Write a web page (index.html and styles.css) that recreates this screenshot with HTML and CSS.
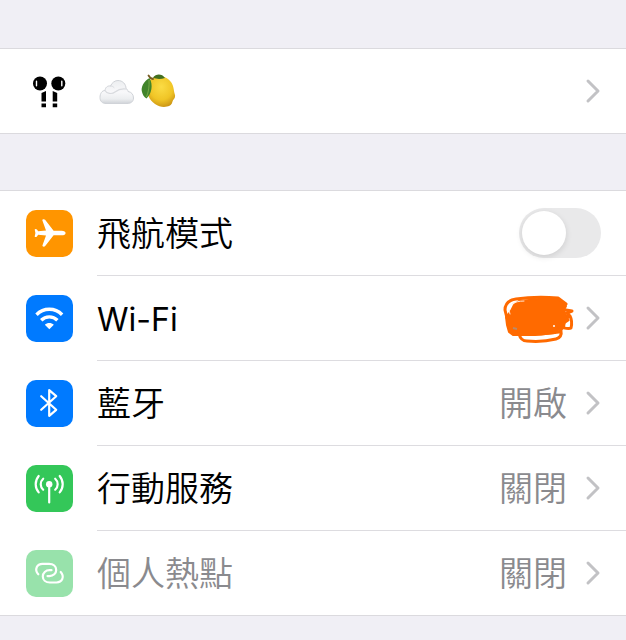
FILE: index.html
```html
<!DOCTYPE html>
<html lang="zh-Hant">
<head>
  <meta charset="UTF-8">
  <meta name="viewport" content="width=device-width, initial-scale=1.0">
  <title>設定</title>
  <link rel="stylesheet" href="styles.css">
</head>
<body>
  <main class="settings">
    <section class="group">
      <a class="row" href="#airpods" aria-label="AirPods">
        <svg class="icon" viewBox="0 0 47 47">
          <circle cx="14" cy="15.500" r="7"/>
          <circle cx="32.300" cy="15.500" r="7"/>
          <path d="M15.500 25l4.500-2v10.500h-4.500zM31.200 25l-4.500-2v10.500h4.500zM15.500 35.500H20v3.700h-4.500zM26.700 35.500h4.500v3.700h-4.500z"/>
          <path d="M10.500 13.300v4.400M35.800 13.300v4.400" fill="none" stroke="#fff" stroke-width="1.400" stroke-linecap="round"/>
        </svg>
        <div class="row-body">
          <span class="label emoji">
            <svg viewBox="0 0 38 38" width="38" height="38">
              <defs>
                <linearGradient id="cloud" x1="0" y1="0" x2="0" y2="1">
                  <stop offset="0" stop-color="#eceef0"/>
                  <stop offset=".5" stop-color="#f8f8fa"/>
                  <stop offset=".8" stop-color="#eceef0"/>
                  <stop offset="1" stop-color="#d0d3d8"/>
                </linearGradient>
              </defs>
              <path d="M9 30.500c-4 0-6-2.500-6-6 0-4 2-7 5-7 .3-3 2.500-5 5.500-4.500C15 9.500 18 7.500 21 7.500c4.500 0 8 3.500 8 8 1 .5 1.800 1.500 2 3 3.500.5 5.500 3 5.500 6.500 0 3.500-2.500 5.500-6.500 5.500z" fill="url(#cloud)" stroke="#d0d3d8" stroke-width="1"/>
              <path d="M8 17.500c1.500 3.200 7 4 10 1.500 3.500-2.800 8-3.500 11-3" fill="none" stroke="#d8dade" stroke-width="1.200" stroke-linecap="round"/>
              <path d="M13.500 13c1.500 0 2.500.5 3.500 1.500" fill="none" stroke="#d8dade" stroke-width="1" stroke-linecap="round"/>
            </svg>
            <svg viewBox="0 0 38 38" width="38" height="38">
              <defs>
                <radialGradient id="lemon" cx=".5" cy=".35" r=".7">
                  <stop offset="0" stop-color="#fbdc45"/>
                  <stop offset=".6" stop-color="#f0c526"/>
                  <stop offset="1" stop-color="#c78f12"/>
                </radialGradient>
              </defs>
              <path d="M12 6c4-3.500 12-4 17 0 4 3 5.500 7 6 12 .3 2.500 1.500 4 1 6-.4 2-2 2.500-2.500 4.500-.5 3-2.500 4.500-5.500 5-3 .8-8 .5-12-2.500C10 27 7.500 20 8.500 13c.4-3 1.500-5 3.500-7z" fill="url(#lemon)"/>
              <path d="M14 4.500c3-4 9-4 12 .5-4 1-8 1.500-12-.5z" fill="#426f20"/>
              <path d="M10.500 5C5 8 1.500 14 3 19c.5 2.500 2 5 4.500 6.500C12.500 21 14.500 12 10.500 5z" fill="#41842b"/>
              <path d="M10 7c.5 6-.5 12-2.500 17" fill="none" stroke="#83b34e" stroke-width=".8"/>
              <path d="M9.500 2.500c1 2 2 3 4.500 3.500" fill="none" stroke="#765b23" stroke-width="1.800" stroke-linecap="round"/>
            </svg>
          </span>
          <svg class="chevron" viewBox="0 0 16 26"><path d="M3 3l10 10L3 23"/></svg>
        </div>
      </a>
    </section>

    <section class="group">
      <div class="row">
        <svg class="icon orange" viewBox="0 0 47 47">
          <path d="M8.700 19.500c0-.8 1.700-.8 2.200 0l1.300 1.700 7.800-.7-3.600-10c-.5-1.300 1.900-1.800 2.700-.7l8.500 10.900h7.900c5.500 0 5.500 4.600 0 4.600h-7.900L19.200 36c-.9 1.200-3.200.7-2.700-.7l3.500-9.800-7.800-.7-1.300 1.700c-.5.8-2.200.8-2.200 0l.7-3.500z" fill="#fff"/>
        </svg>
        <div class="row-body">
          <label class="label" for="airplane">飛航模式</label>
          <input class="switch" type="checkbox" role="switch" id="airplane">
        </div>
      </div>

      <a class="row" href="#wifi">
        <svg class="icon blue" viewBox="0 0 47 47">
          <path d="M10.500 19.700c7-7.200 18.600-7.200 25.600 0M15.200 25.200c4.500-4.500 11.700-4.500 16.200 0" fill="none" stroke="#fff" stroke-width="3.400"/>
          <path d="M18.800 29.700c2.500-2.200 6.500-2.200 9 0l-4.500 4.600z" fill="#fff"/>
        </svg>
        <div class="row-body">
          <span class="label latin">Wi-Fi</span>
          <svg class="scribble" viewBox="0 0 74 52" role="img" aria-label="Wi-Fi">
            <path d="M13 13l5-4 20-2 18 0 5 3 4 4-2 4 2 5 3 2-4 4-1 6-5 2-4 4-20 2-22 0-4-3-2-7-1-8 5-6z" fill="#ff6a00" stroke="#ff6a00" stroke-width="2" stroke-linejoin="round"/>
            <g fill="none" stroke="#ff6a00" stroke-width="3" stroke-linejoin="round" stroke-linecap="round">
              <path d="M65 12l-8-6c-14-1-28-1-42 1-7 1-11 5-11 11 1 6 3 11 5 15 0 6 3 9 8 9h23l18-2 4-5"/>
              <path d="M65 18l6 1-5 2 3 3c2 4 2 8 1 12-3 2-8-1-12-1"/>
              <path d="M58 34l9-6"/>
              <path d="M18 42c1 4 4 7 8 7 11 1 21 0 29-2 4-1 6-4 5-8"/>
            </g>
            <path d="M11 12c3-2 7-3 12-3M8 18l1 4" fill="none" stroke="#ffe9d9" stroke-width="1" stroke-linecap="round"/>
            <circle cx="53" cy="34" r="1" fill="#fff"/>
            <path d="M12 36l4 1" stroke="#b98a6a" stroke-width="2"/>
          </svg>
          <svg class="chevron" viewBox="0 0 16 26"><path d="M3 3l10 10L3 23"/></svg>
        </div>
      </a>

      <a class="row" href="#bluetooth">
        <svg class="icon blue" viewBox="0 0 47 47">
          <path d="M15.200 16.200l15 13.600-7 6V10.200l7 6-15 13.600" fill="none" stroke="#fff" stroke-width="2.200" stroke-linejoin="round" stroke-linecap="round"/>
        </svg>
        <div class="row-body">
          <span class="label">藍牙</span>
          <span class="value">開啟</span>
          <svg class="chevron" viewBox="0 0 16 26"><path d="M3 3l10 10L3 23"/></svg>
        </div>
      </a>

      <a class="row" href="#cellular">
        <svg class="icon green" viewBox="0 0 47 47">
          <circle cx="23.200" cy="19.200" r="3.200" fill="#fff"/>
          <path d="M23.200 20v17.500M17.200 13.700c-3.300 3-3.300 8 0 11M29.200 13.700c3.300 3 3.300 8 0 11M12.700 11c-4 4.800-4 11.600 0 16.400M33.700 11c4 4.800 4 11.600 0 16.400" fill="none" stroke="#fff" stroke-width="2.200" stroke-linecap="round"/>
        </svg>
        <div class="row-body">
          <span class="label">行動服務</span>
          <span class="value">關閉</span>
          <svg class="chevron" viewBox="0 0 16 26"><path d="M3 3l10 10L3 23"/></svg>
        </div>
      </a>

      <a class="row disabled" href="#hotspot">
        <svg class="icon green" viewBox="0 0 47 47">
          <g fill="none" stroke="#fff" stroke-width="2.200" stroke-linecap="round">
            <path d="M12.300 24.300c-4.300-4.800-1.300-10.500 4.200-10.500h6.500c4.500 0 7.200 2.700 7.200 6.100 0 3.500-2.900 6.200-6.700 6.200h-2"/>
            <path d="M34.700 22c4.300 4.800 1.300 10.500-4.200 10.500H24c-4.500 0-7.200-2.700-7.200-6.100 0-3.500 2.900-6.200 6.700-6.200h2"/>
          </g>
        </svg>
        <div class="row-body">
          <span class="label">個人熱點</span>
          <span class="value">關閉</span>
          <svg class="chevron" viewBox="0 0 16 26"><path d="M3 3l10 10L3 23"/></svg>
        </div>
      </a>
    </section>
  </main>
</body>
</html>
```
FILE: styles.css
```css
body {
  margin: 0;
  background-color: #f0eff5;
  color: #000;
  font-family: Inter, "Noto Sans CJK TC", sans-serif;
  font-size: 34px;
  font-weight: 350;
  line-height: 48px;
}
.settings {
  display: flex;
  flex-direction: column;
  gap: 56px;
  padding: 48px 0 24px;
}
.group {
  background: #fff;
  border-top: 1px solid #dbdade;
  border-bottom: 1px solid #dbdade;
}
.row {
  display: flex;
  align-items: center;
  gap: 24px;
  padding-left: 26px;
  color: inherit;
  text-decoration: none;
}
.row-body {
  flex: 1;
  display: flex;
  align-items: center;
  gap: 18px;
  min-height: 84px;
  padding-right: 25px;
  border-bottom: 1px solid #dddce0;
}
.row:last-child .row-body {
  border-bottom: none;
}
.icon {
  width: 47px;
  height: 47px;
  border-radius: 10px;
}
.orange {
  background: #ff9500;
}
.blue {
  background: #007aff;
}
.green {
  background: #34c759;
}
.label {
  flex: 1;
  padding-top: 2px;
}
.latin {
  padding-top: 4px;
  font-size: 32px;
  font-weight: 400;
}
.emoji {
  display: flex;
  gap: 4px;
}
.value {
  padding-top: 2px;
  color: #8a8a8e;
}
.chevron {
  width: 16px;
  height: 26px;
  fill: none;
  stroke: #c2c2c5;
  stroke-width: 3;
  stroke-linecap: round;
  stroke-linejoin: round;
}
.scribble {
  width: 74px;
  height: 52px;
  margin-right: -8px;
}
.switch {
  appearance: none;
  width: 82px;
  height: 50px;
  margin: 0;
  padding: 3px;
  box-sizing: border-box;
  border-radius: 25px;
  background: #e9e9ea;
  cursor: pointer;
}
.switch::before {
  content: "";
  display: block;
  width: 44px;
  height: 44px;
  border-radius: 50%;
  background: #fff;
  box-shadow: 0 2px 6px rgba(0, 0, 0, 0.12);
}
.switch:checked {
  background: #34c759;
}
.switch:checked::before {
  margin-left: auto;
}
.disabled .label {
  color: #8a8a8e;
}
.disabled .icon {
  opacity: 0.5;
}
```
